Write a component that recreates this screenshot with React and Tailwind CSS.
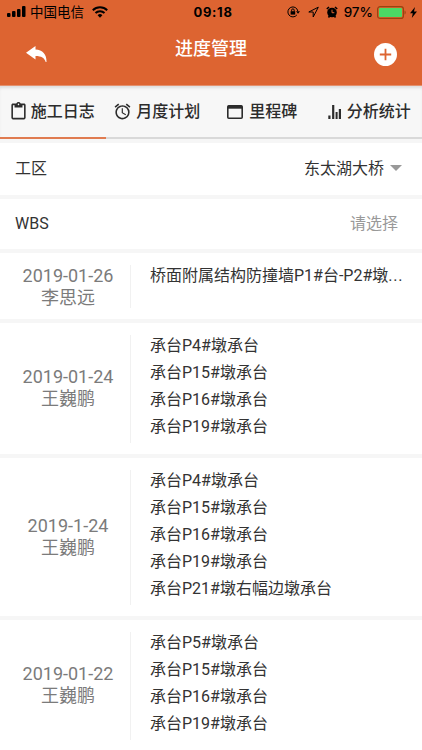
import { MdContentPaste, MdAlarm } from 'react-icons/md'

const entries = [
  { date: '2019-01-26', name: '李思远', items: ['桥面附属结构防撞墙P1#台-P2#墩...'] },
  { date: '2019-01-24', name: '王巍鹏', items: ['承台P4#墩承台', '承台P15#墩承台', '承台P16#墩承台', '承台P19#墩承台'] },
  {
    date: '2019-1-24',
    name: '王巍鹏',
    items: ['承台P4#墩承台', '承台P15#墩承台', '承台P16#墩承台', '承台P19#墩承台', '承台P21#墩右幅边墩承台'],
  },
  { date: '2019-01-22', name: '王巍鹏', items: ['承台P5#墩承台', '承台P15#墩承台', '承台P16#墩承台', '承台P19#墩承台'] },
]

const WindowIcon = () => (
  <svg className="w-4 h-[14px]" viewBox="0 0 16 14" fill="none" stroke="currentColor">
    <rect x="0.8" y="0.8" width="14.4" height="12.4" rx="1" strokeWidth="1.6" />
    <path d="M1 2.2h14" strokeWidth="3" />
  </svg>
)

const StatsIcon = () => (
  <svg className="w-[14px] h-[14px]" viewBox="0 0 14 14" fill="currentColor">
    <rect x="0.3" y="10.5" width="2.2" height="3.5" />
    <rect x="4.1" y="0" width="2.2" height="14" />
    <rect x="7.6" y="7" width="2" height="7" />
    <rect x="10.8" y="4" width="2.2" height="10" />
  </svg>
)

const tabs = [
  { label: '施工日志', icon: <MdContentPaste className="w-[19px] h-[19px]" />, active: true },
  { label: '月度计划', icon: <MdAlarm className="w-[19px] h-[19px] -ml-px mr-px" /> },
  { label: '里程碑', icon: <WindowIcon />, gap: 'gap-[6px] pr-[3px]' },
  { label: '分析统计', icon: <StatsIcon />, gap: 'gap-[5px]' },
]

const StatusBar = () => (
  <div className="h-6 grid grid-cols-[1fr_auto_1fr] items-center pl-[7px] pr-[5px] text-black text-[13px] leading-6">
    <div className="flex items-center">
      <svg className="w-[19px] h-[12px]" viewBox="0 0 19 12" fill="currentColor">
        <rect x="0" y="7" width="3.5" height="4" rx="1" />
        <rect x="5" y="5" width="3.5" height="6" rx="1" />
        <rect x="10" y="3" width="3.5" height="8" rx="1" />
        <rect x="15" y="0" width="3.5" height="11" rx="1" />
      </svg>
      <span className="ml-1 text-[13.5px]">中国电信</span>
      <svg className="ml-2 w-4 h-3" viewBox="0 0 16 12" fill="none" stroke="currentColor" strokeWidth="2">
        <path d="M.8 4.2a10.3 10.3 0 0 1 14.4 0" />
        <path d="M3.5 7a6.4 6.4 0 0 1 9 0" />
        <path d="M8 11.8 5.6 9.2a3.5 3.5 0 0 1 4.8 0z" fill="currentColor" stroke="none" />
      </svg>
    </div>
    <span className="font-['Inter'] font-bold text-[13px] tracking-[0.7px] pl-0.5">09:18</span>
    <div className="flex items-center justify-end">
      <svg className="w-[13px] h-[12px]" viewBox="0 0 13 12" fill="none" stroke="currentColor">
        <path d="M9.9 8.9A5 5 0 1 1 10.8 5" />
        <path d="M9 5.2h4L11 7.8z" fill="currentColor" stroke="none" />
        <rect x="3.6" y="5.2" width="4.6" height="3.4" fill="currentColor" stroke="none" />
        <path d="M4.6 5.4V4.2a1.3 1.3 0 0 1 2.6 0v1.2" />
      </svg>
      <svg className="ml-2 w-[11px] h-[12px]" viewBox="0 0 11 12" fill="none" stroke="currentColor" strokeLinejoin="round">
        <path d="M10.3 1.2.8 6h4.4v5z" />
      </svg>
      <svg className="ml-[7px] w-3 h-3" viewBox="0 0 12 12">
        <circle cx="6" cy="6.5" r="4.8" />
        <path d="M.8 3 3 1M11.2 3 9 1M2.5 11.5l1-1.5M9.5 11.5l-1-1.5" stroke="#000" strokeWidth="1.6" />
        <path d="M6 3.7v3h2.3" fill="none" stroke="#dd6431" strokeWidth="1" />
      </svg>
      <span className="ml-[6px] font-['Inter'] font-medium text-[13.5px]">97%</span>
      <svg className="ml-1 w-[29px] h-[13px]" viewBox="0 0 29 13">
        <rect x="0.6" y="0.6" width="25.8" height="11.8" rx="2.5" fill="none" stroke="#984410" strokeWidth="1.2" />
        <rect x="2" y="2" width="23" height="9" rx="1" fill="#4cd964" />
        <path d="M27.5 4.5c1.6.8 1.6 3.2 0 4z" fill="#984410" />
      </svg>
      <svg className="ml-1 w-[7px] h-[11px]" viewBox="0 0 7 11">
        <path d="M5 0 0 6.2h2.8L1.8 11 7 4.6H4z" />
      </svg>
    </div>
  </div>
)

const Header = () => (
  <header className="h-[86px] bg-[#dd6431] border-b border-[#e3906d]">
    <StatusBar />
    <div className="h-[60px] grid grid-cols-[1fr_auto_1fr] items-center text-white">
      <div className="pl-[26px]">
        <svg className="w-[21px] h-[16px]" viewBox="0 0 21 16" fill="currentColor">
          <path d="M9.5 0v3.6C16.5 4 20.8 8.500 20.5 16h-.8C18.5 12 15.5 10 9.5 10v3.6L0 6.8z" />
        </svg>
      </div>
      <h1 className="text-[18px] font-medium leading-6 pb-[11px]">进度管理</h1>
      <div className="flex justify-end pr-[25px]">
        <svg className="w-[23px] h-[23px]" viewBox="0 0 23 23">
          <circle cx="11.5" cy="11.5" r="11.5" fill="currentColor" />
          <path d="M11.5 5.8v11.4M5.8 11.5h11.4" stroke="#dd6431" strokeWidth="1.8" />
        </svg>
      </div>
    </div>
  </header>
)

const Entry = ({ date, name, items }) => (
  <div className="flex min-h-[65px] bg-white">
    <div
      className={`mt-3 mb-[11px] w-[131px] shrink-0 pl-[6px] flex flex-col items-center justify-center gap-px border-r border-[#f1f1f1] text-[18px] leading-[21px] text-[#7b7b7b] ${
        items.length > 1 ? 'pb-[3px]' : ''
      }`}
    >
      <span>{date}</span>
      <span>{name}</span>
    </div>
    <ul className="flex-1 min-w-0 pt-[9px] pb-[14px] pl-[19px] text-[16px] leading-[27px] text-[#333]">
      {items.map((item) => (
        <li key={item} className="whitespace-nowrap">
          {item.replace('...', '')}
          {item.endsWith('...') && <span className="tracking-[0.8px]">...</span>}
        </li>
      ))}
    </ul>
  </div>
)

export default function App() {
  return (
    <div className="w-[422px] h-[750px] overflow-hidden bg-[#f6f6f6] font-['Roboto','Noto_Sans_CJK_SC',sans-serif]">
      <Header />

      {/* Tabs */}
      <nav className="h-[53px] grid grid-cols-4 bg-[#f7f7f7] shadow-[inset_0_3px_3px_-1px_#dddddd]">
        {tabs.map((tab) => (
          <div
            key={tab.label}
            className={`flex items-center justify-center border-b-2 text-[16px] font-medium whitespace-nowrap text-[#2c2c2c] ${
              tab.gap || 'gap-[3px] pr-[2px]'
            } ${tab.active ? 'border-[#e07b50]' : 'border-[#d9d9d9]'}`}
          >
            {tab.icon}
            <span>{tab.label}</span>
          </div>
        ))}
      </nav>

      {/* Filters */}
      <div className="mt-1 h-[52px] flex items-center justify-between bg-white pl-[15px] pr-5 text-[16px] text-[#333]">
        <span>工区</span>
        <div className="flex items-center gap-[6px]">
          <span>东太湖大桥</span>
          <svg className="w-3 h-[6px] -translate-y-px" viewBox="0 0 12 6">
            <path d="M0 0h12L6 6z" fill="#999" />
          </svg>
        </div>
      </div>
      <div className="mt-1 h-[50px] flex items-center justify-between bg-white pl-[15px] pr-6 text-[16px] text-[#333]">
        <span>WBS</span>
        <span className="text-[#999]">请选择</span>
      </div>

      {/* Log entries */}
      <div className="mt-1 flex flex-col gap-1">
        {entries.map((entry, i) => (
          <Entry key={i} {...entry} />
        ))}
      </div>
    </div>
  )
}
